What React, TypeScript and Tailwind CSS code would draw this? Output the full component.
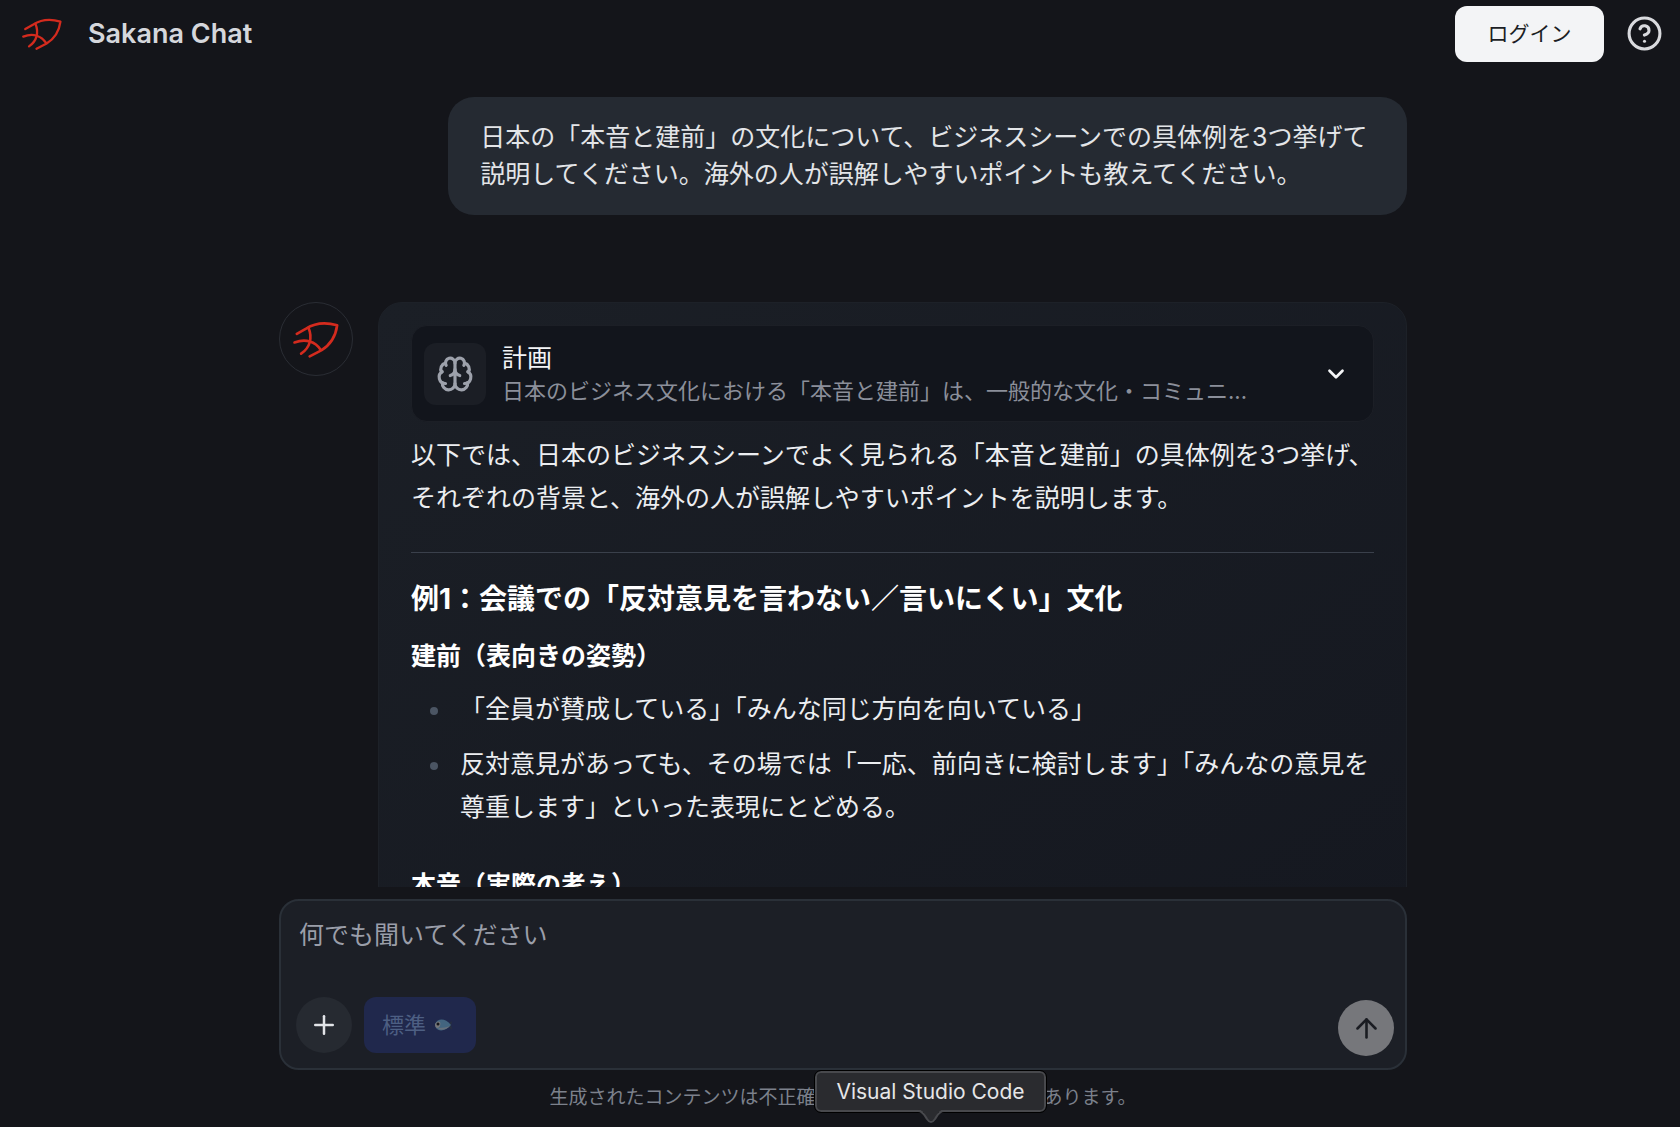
import React from "react";
import { ArrowUp, Brain, ChevronDown, CircleHelp, Plus } from "lucide-react";

const SakanaLogo = ({ className }: { className?: string }) => (
  <svg
    viewBox="68 88 144 118"
    fill="none"
    stroke="#d42b1e"
    strokeWidth="8"
    strokeLinecap="round"
    strokeLinejoin="round"
    className={className}
    aria-hidden="true"
  >
    <path d="M82 130 L110 114 C138 96 170 94 204 104 C199 142 182 164 156 180 L121 198" />
    <path d="M117 111 C130 142 122 172 95 190" />
    <path d="M75 156 C110 143 138 154 154 178" />
  </svg>
);

const FishIcon = () => (
  <svg viewBox="0 0 20 14" className="h-[14px] w-5" aria-hidden="true">
    <path d="M13 7 L18 3 L17 7 L18 12 Z" fill="#28303f" />
    <path d="M1 6 C4 0 11 0 17 7 C12 13 5 14 2 10 Z" fill="#436580" />
    <path d="M1 6 C3 3 5 3 6 4 C7 6 6 9 4 10 C2 10 1 9 1 6 Z" fill="#77777a" />
    <path d="M4 11 C9 13 13 11 16 8 C13 9 9 10 5 10 Z" fill="#66707c" />
    <circle cx="4" cy="6" r="1.5" fill="#15171c" />
  </svg>
);

const Header = () => (
  <header className="flex h-[67px] shrink-0 items-center justify-between pl-[21px] pr-[17px]">
    <div className="flex items-center gap-[25px]">
      <SakanaLogo className="h-[34px] w-[42px]" />
      <h1 className="pt-0.5 text-[27px] font-semibold text-[#d5d7dc]">Sakana Chat</h1>
    </div>
    <div className="flex items-center gap-[22px]">
      <button className="h-14 w-[149px] rounded-xl bg-[#f3f4f6] text-[21px] text-[#1b1e25]">
        ログイン
      </button>
      <button aria-label="ヘルプ" className="text-[#d9dade]">
        <CircleHelp size={37} />
      </button>
    </div>
  </header>
);

const PlanButton = () => (
  <button className="flex w-full items-center gap-4 rounded-2xl border border-[#1c1f26] bg-[#12151c] py-4 pl-3 pr-6 text-left">
    <span className="flex size-[62px] shrink-0 items-center justify-center rounded-xl bg-[#1b1e25] text-[#9da1ab]">
      <Brain size={38} />
    </span>
    <span className="flex min-w-0 flex-1 flex-col gap-[3px]">
      <span className="text-[25px] leading-8 text-[#f3f4f6]">計画</span>
      <span className="truncate text-[22px] leading-7 text-[#8b8f9a]">
        日本のビジネス文化における「本音と建前」は、一般的な文化・コミュニ...
      </span>
    </span>
    <ChevronDown size={26} strokeWidth={2.5} className="shrink-0 text-[#f3f4f6]" />
  </button>
);

const points = [
  "「全員が賛成している」「みんな同じ方向を向いている」",
  "反対意見があっても、その場では「一応、前向きに検討します」「みんなの意見を尊重します」といった表現にとどめる。",
];

const Answer = () => (
  <article className="flex items-start gap-[25px]">
    <div className="flex size-[74px] shrink-0 items-center justify-center rounded-full border border-[#2a2d34]">
      <SakanaLogo className="h-[39px] w-12" />
    </div>
    <div className="min-w-0 flex-1 rounded-3xl border border-[#1d2128] bg-linear-to-br from-[#1b1f26] to-[#151820] px-8 pb-10 pt-[22px]">
      <PlanButton />
      <p className="mt-3 text-[25px] leading-[43px] text-[#eceef1]">
        以下では、日本のビジネスシーンでよく見られる「本音と建前」の具体例を3つ挙げ、それぞれの背景と、海外の人が誤解しやすいポイントを説明します。
      </p>
      <hr className="mt-8 border-[#3a404b]" />
      <h2 className="mt-6 text-[28px] font-bold leading-[44px] text-white">
        例1：会議での「反対意見を言わない／言いにくい」文化
      </h2>
      <h3 className="mt-[15px] text-[25px] font-bold leading-10 text-white">建前（表向きの姿勢）</h3>
      <ul className="mt-3 flex flex-col gap-3">
        {points.map((point) => (
          <li key={point} className="flex gap-[22px] pl-[19px]">
            <span className="mt-[19px] size-2 shrink-0 rounded-full bg-[#4b5563]" />
            <span className="text-[25px] leading-[43px] text-[#eceef1]">{point}</span>
          </li>
        ))}
      </ul>
      <h3 className="mt-9 text-[25px] font-bold leading-10 text-white">本音（実際の考え）</h3>
    </div>
  </article>
);

const Composer = () => (
  <form className="rounded-[20px] border-2 border-[#2a3038] bg-[#1c1f26] pb-3 pl-[15px] pr-[11px] pt-3">
    <textarea
      aria-label="メッセージ"
      placeholder="何でも聞いてください"
      className="block h-[84px] w-full resize-none bg-transparent px-[3px] pt-0.5 text-[25px] leading-10 text-[#eceef1] outline-none placeholder:text-[#9a9ea9]"
    />
    <div className="flex items-end justify-between">
      <div className="flex gap-3 pb-[3px]">
        <button
          type="button"
          aria-label="追加"
          className="flex size-14 items-center justify-center rounded-full bg-[#262a31] text-[#e2e4e8]"
        >
          <Plus size={30} />
        </button>
        <button
          type="button"
          className="flex h-14 w-28 items-center justify-center gap-2 rounded-xl bg-[#20284c] pr-1 text-[22px] text-[#4d5f83]"
        >
          標準
          <FishIcon />
        </button>
      </div>
      <button
        type="button"
        aria-label="送信"
        className="flex size-14 items-center justify-center rounded-full bg-[#76777b] text-[#1a1c22]"
      >
        <ArrowUp size={31} />
      </button>
    </div>
  </form>
);

const DockTooltip = () => (
  <div
    role="tooltip"
    className="absolute left-[815px] top-[1071px] flex h-[41px] w-[231px] items-center justify-center rounded-md border-2 border-[#48494d] bg-[#2a2b2f] text-[21px] text-[#e6e6e8] outline outline-black"
  >
    Visual Studio Code
    <svg viewBox="0 0 28 17" className="absolute left-[100px] top-[35px] h-[17px] w-7" aria-hidden="true">
      <path d="M1 1 C6 2 8 7 10 10 Q14 16 18 10 C20 7 22 2 27 1 V0 H1 Z" fill="#2a2b2f" />
      <path d="M1 3 C6 3 8 8 10 11 Q14 17 18 11 C20 8 22 3 27 3" fill="none" stroke="#48494d" strokeWidth="2" />
    </svg>
  </div>
);

export default function App() {
  return (
    <div className="relative flex h-screen flex-col overflow-hidden bg-[#14151a] font-[Inter,'Noto_Sans_CJK_JP',sans-serif]">
      <Header />
      <main className="min-h-0 flex-1 overflow-hidden pl-1.5">
        <div className="mx-auto flex max-w-[1128px] flex-col gap-[87px] pt-[30px]">
          <div className="w-[85%] self-end rounded-[26px] bg-[#252a32] px-8 py-[22px] text-[25px] leading-[37px] text-[#e3e5e8]">
            日本の「本音と建前」の文化について、ビジネスシーンでの具体例を3つ挙げて説明してください。海外の人が誤解しやすいポイントも教えてください。
          </div>
          <Answer />
        </div>
      </main>
      <footer className="shrink-0 pb-[13px] pl-1.5 pt-3">
        <div className="mx-auto max-w-[1128px]">
          <Composer />
          <p className="mt-3 text-center text-[19px] leading-8 text-[#7c818c]">
            生成されたコンテンツは不正確な情報が含まれる可能性があります。
          </p>
        </div>
      </footer>
      <DockTooltip />
    </div>
  );
}
